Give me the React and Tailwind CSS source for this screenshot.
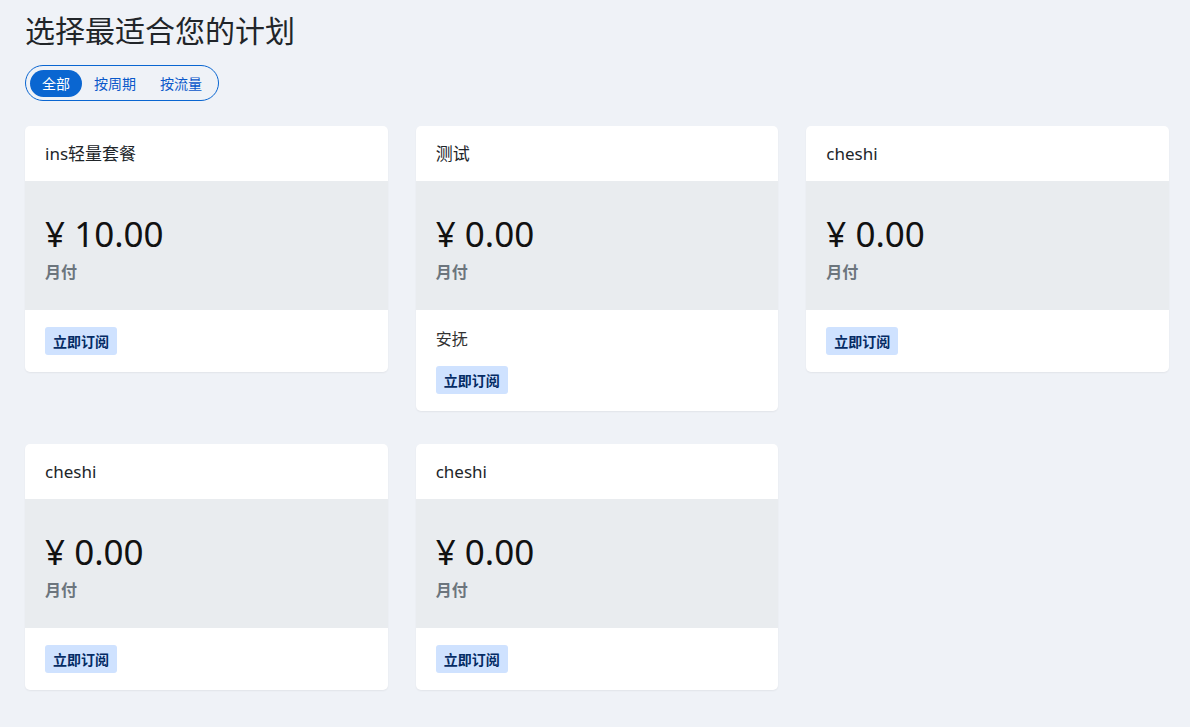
// 訂閱方案頁：標題 + 篩選膠囊 + 方案卡片網格
import { useState } from 'react'

const plans = [
  { name: 'ins轻量套餐', price: '10.00', period: '月付' },
  { name: '测试', price: '0.00', period: '月付', desc: '安抚' },
  { name: 'cheshi', price: '0.00', period: '月付' },
  { name: 'cheshi', price: '0.00', period: '月付' },
  { name: 'cheshi', price: '0.00', period: '月付' },
]

const tabs = ['全部', '按周期', '按流量']

function PlanCard({ plan }) {
  return (
    <div className="bg-white rounded-[5px] shadow-[0_1px_2px_rgba(0,0,0,0.06)] overflow-hidden self-start">
      <div className="h-[55px] px-5 flex items-center text-[17px] text-[#212529]">{plan.name}</div>
      <div className="bg-[#e9ecef] px-5 pt-[31px] pb-[26px]">
        <div className="text-[35px] leading-[43px] text-[#111]">¥ {plan.price}</div>
        <div className="mt-[5px] text-[16px] leading-[24px] font-bold text-[#6c757d]">{plan.period}</div>
      </div>
      <div className="px-5 py-[17px]">
        {plan.desc && <p className="text-[16px] leading-[24px] text-[#333] mb-[15px]">{plan.desc}</p>}
        <button className="h-[28px] px-2 rounded-[3px] bg-[#cfe2ff] text-[14px] font-bold text-[#052c65]">立即订阅</button>
      </div>
    </div>
  )
}

export default function App() {
  const [active, setActive] = useState(0)

  return (
    <div className="min-h-[727px] bg-[#eff2f7] pl-[25px] pr-[21px] pt-[13px] pb-8 font-['Noto_Sans','Noto_Sans_CJK_SC',sans-serif]">
      <h1 className="text-[30px] leading-[36px] text-[#212529]">选择最适合您的计划</h1>

      {/* 篩選膠囊 */}
      <div className="mt-[16px] inline-flex items-center h-[36px] px-[4px] border border-[#0a66d1] rounded-full">
        {tabs.map((t, i) => (
          <button
            key={t}
            onClick={() => setActive(i)}
            className={`h-[27px] px-3 rounded-full text-[14px] ${
              active === i ? 'bg-[#0a66d1] text-white' : 'text-[#0a58ca]'
            }`}
          >
            {t}
          </button>
        ))}
      </div>

      <div className="mt-[25px] grid grid-cols-3 gap-x-[28px] gap-y-[33px]">
        {plans.map((p, i) => (
          <PlanCard key={i} plan={p} />
        ))}
      </div>
    </div>
  )
}
